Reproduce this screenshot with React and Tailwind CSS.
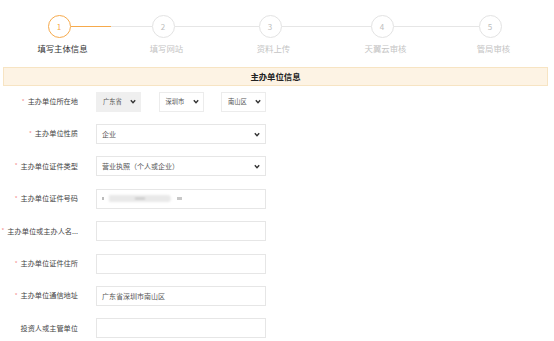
const steps = [
  { n: 1, label: '填写主体信息', active: true },
  { n: 2, label: '填写网站' },
  { n: 3, label: '资料上传' },
  { n: 4, label: '天翼云审核' },
  { n: 5, label: '管局审核' },
]

// gaps between circle edges
const lines = ['w-[81px]', 'w-[84px]', 'w-[89px]', 'w-[85px]']

function Chevron() {
  return (
    <svg width="6" height="5" viewBox="0 0 6 5" className="shrink-0">
      <polyline points="0.8,1.2 3,3.6 5.2,1.2" fill="none" stroke="#333" strokeWidth="1.4" />
    </svg>
  )
}

function Label({ text, required = true }) {
  return (
    <div className="w-[78px] shrink-0 flex items-center justify-end gap-[3px] text-[7.2px] leading-none text-[#444] whitespace-nowrap">
      {required && <span className="text-[#f58c8c] text-[6px]">*</span>}
      <span>{text}</span>
    </div>
  )
}

function Box({ children, select }) {
  return (
    <div className="w-[170px] h-[20px] border border-[#e6e6e6] bg-white flex items-center justify-between pl-[5px] pr-[5px] text-[7px] leading-none text-[#555]">
      <div className="flex items-center">{children}</div>
      {select && <Chevron />}
    </div>
  )
}

function SmallSelect({ value, gray }) {
  return (
    <div
      className={`w-[45px] h-[20px] flex items-center justify-between pl-[6px] pr-[4px] text-[6.3px] leading-none text-[#555] border ${
        gray ? 'bg-[#efefef] border-[#efefef]' : 'bg-white border-[#ececec]'
      }`}
    >
      <span>{value}</span>
      <Chevron />
    </div>
  )
}

export default function App() {
  return (
    <div className="w-[554px] h-[341px] bg-white overflow-hidden font-['Noto_Sans_CJK_SC',sans-serif]">
      {/* Steps */}
      <div className="flex items-start pl-[47.5px] pt-[15px] h-[60px]">
        {steps.map((s, i) => (
          <div key={s.n} className="flex items-start">
            <div className="w-[23px] flex flex-col items-center">
              <div
                className={`w-[23px] h-[23px] rounded-full flex items-center justify-center text-[8px] leading-none border-[1.5px] ${
                  s.active ? 'border-[#f6aa4c] text-[#f6aa4c]' : 'border-[#e3e3e3] text-[#bdbdbd]'
                }`}
              >
                {s.n}
              </div>
              <div
                className={`mt-[6px] ml-[7px] whitespace-nowrap text-[8.4px] leading-none ${
                  s.active ? 'text-[#333]' : 'text-[#c4c4c4]'
                }`}
              >
                {s.label}
              </div>
            </div>
            {i < lines.length && (
              <div className={`${lines[i]} mt-[11px] h-px flex`}>
                {i === 0 && <div className="w-[40px] bg-[#f6aa4c]" />}
                <div className="flex-1 bg-[#e6e6e6]" />
              </div>
            )}
          </div>
        ))}
      </div>

      {/* Section header */}
      <div className="mt-[7px] mx-[3px] w-[545px] h-[19px] bg-[#fdf3e4] border border-[#f7e4c3] flex items-center justify-center text-[8.4px] font-bold leading-none text-[#222]">
        主办单位信息
      </div>

      {/* Form */}
      <div className="mt-[5.7px] flex flex-col gap-[12.4px]">
        <div className="flex items-center gap-[18px]">
          <Label text="主办单位所在地" />
          <div className="flex items-center gap-[17.5px]">
            <SmallSelect value="广东省" gray />
            <SmallSelect value="深圳市" />
            <SmallSelect value="南山区" />
          </div>
        </div>
        <div className="flex items-center gap-[18px]">
          <Label text="主办单位性质" />
          <Box select>企业</Box>
        </div>
        <div className="flex items-center gap-[18px]">
          <Label text="主办单位证件类型" />
          <Box select>营业执照（个人或企业）</Box>
        </div>
        <div className="flex items-center gap-[18px]">
          <Label text="主办单位证件号码" />
          <Box>
            <span className="w-[1.5px] h-[3px] bg-[#bbb]" />
            <span className="ml-[5px] w-[62px] h-[7px] rounded-r-full bg-[#e9e9e9] blur-[1px] flex items-center justify-center">
              <span className="w-[10px] h-px bg-[#aaa]" />
            </span>
            <span className="ml-[6px] w-[5px] h-[3px] bg-[#c8c8c8] blur-[0.5px]" />
          </Box>
        </div>
        <div className="flex items-center gap-[18px]">
          <Label text="主办单位或主办人名..." />
          <Box />
        </div>
        <div className="flex items-center gap-[18px]">
          <Label text="主办单位证件住所" />
          <Box />
        </div>
        <div className="flex items-center gap-[18px]">
          <Label text="主办单位通信地址" />
          <Box>广东省深圳市南山区</Box>
        </div>
        <div className="flex items-center gap-[18px]">
          <Label text="投资人或主管单位" required={false} />
          <Box />
        </div>
      </div>
    </div>
  )
}
